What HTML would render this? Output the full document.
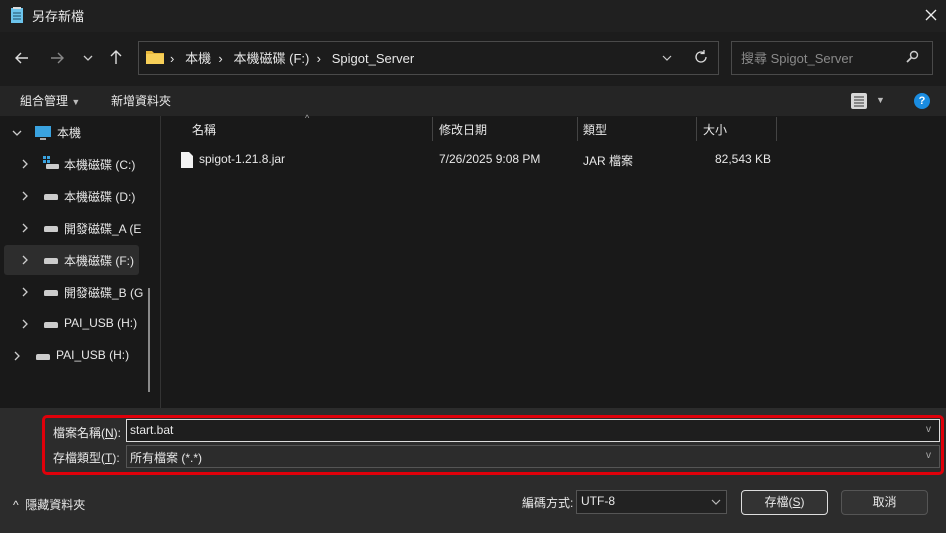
<!DOCTYPE html>
<html><head><meta charset="utf-8"><style>
*{margin:0;padding:0;box-sizing:border-box}
body{width:946px;height:533px;overflow:hidden;background:#191919;font-family:"Liberation Sans","Noto Sans CJK TC",sans-serif;font-size:12px;color:#e8e8e8;position:relative}
.a{position:absolute;white-space:nowrap}
.dim{color:#9a9a9a}
.ch{position:absolute}
</style></head><body>
<div class="a" style="left:0;top:0;width:946px;height:32px;background:#202020"></div>
<div class="a" style="left:0;top:32px;width:946px;height:54px;background:#1c1c1c"></div>
<div class="a" style="left:0;top:86px;width:946px;height:30px;background:#252525"></div>
<svg class="a" style="left:10px;top:7px" width="14" height="17"><rect x="1" y="1" width="12" height="15" fill="#6cc4ec"/><rect x="3" y="0" width="8" height="2" fill="#ddd"/><g stroke="#1b4b66"><line x1="3" y1="6" x2="11" y2="6"/><line x1="3" y1="9" x2="11" y2="9"/><line x1="3" y1="12" x2="11" y2="12"/></g></svg>
<div class="a" style="left:32px;top:6px;font-size:13px">另存新檔</div>
<svg class="a" style="left:924px;top:8px" width="14" height="14"><path d="M2 2L12 12M12 2L2 12" stroke="#eee" stroke-width="1.3"/></svg>
<svg class="a" style="left:14px;top:50px" width="16" height="16"><path d="M14 8H2M7 3L2 8l5 5" stroke="#ddd" stroke-width="1.4" fill="none"/></svg>
<svg class="a" style="left:49px;top:50px" width="16" height="16"><path d="M2 8h12M9 3l5 5-5 5" stroke="#888" stroke-width="1.4" fill="none"/></svg>
<svg class="a" style="left:82px;top:52px" width="12" height="12"><path d="M2 4l4 4 4-4" stroke="#ccc" stroke-width="1.3" fill="none"/></svg>
<svg class="a" style="left:108px;top:49px" width="16" height="16"><path d="M8 15V2M3 7l5-5 5 5" stroke="#ddd" stroke-width="1.4" fill="none"/></svg>
<div class="a" style="left:138px;top:41px;width:581px;height:34px;border:1px solid #4a4a4a;background:#1c1c1c"></div>
<svg class="a" style="left:146px;top:50px" width="18" height="14"><path d="M0 1h6l2 2h10v11H0z" fill="#e8b83c"/><rect x="0" y="4" width="18" height="10" fill="#f7cf58"/></svg>
<div class="a" style="left:170px;top:48px;font-size:13px">›&nbsp;&nbsp; 本機 &nbsp;›&nbsp;&nbsp; 本機磁碟 (F:) &nbsp;›&nbsp;&nbsp; Spigot_Server</div>
<svg class="a" style="left:662px;top:53px" width="10" height="10"><path d="M1 3l4 4 4-4" stroke="#ccc" stroke-width="1.2" fill="none"/></svg>
<svg class="a" style="left:694px;top:50px" width="14" height="14"><path d="M12 7a5 5 0 1 1-2-4M10 0v3.5h-3.5" stroke="#ddd" stroke-width="1.3" fill="none"/></svg>
<div class="a" style="left:731px;top:41px;width:202px;height:34px;border:1px solid #4a4a4a"></div>
<div class="a dim" style="left:741px;top:48px;font-size:13px;color:#8a8a8a">搜尋 Spigot_Server</div>
<svg class="a" style="left:905px;top:50px" width="14" height="14"><circle cx="9" cy="5" r="3.5" stroke="#ccc" stroke-width="1.4" fill="none"/><path d="M6.5 7.5L2 12" stroke="#ccc" stroke-width="1.8"/></svg>
<div class="a" style="left:20px;top:92px">組合管理 <span style="font-size:9px;color:#bbb">▼</span></div>
<div class="a" style="left:111px;top:92px">新增資料夾</div>
<svg class="a" style="left:851px;top:93px" width="16" height="16"><rect x="0" y="0" width="16" height="16" rx="2" fill="#d8d8d8"/><g stroke="#333"><line x1="3" y1="4" x2="13" y2="4"/><line x1="3" y1="7" x2="13" y2="7"/><line x1="3" y1="10" x2="13" y2="10"/><line x1="3" y1="13" x2="13" y2="13"/></g></svg>
<div class="a" style="left:876px;top:95px;font-size:9px;color:#bbb">▼</div>
<div class="a" style="left:914px;top:93px;width:16px;height:16px;border-radius:50%;background:#1a8ce0;color:#fff;font-size:11px;font-weight:bold;text-align:center;line-height:16px">?</div>
<div class="a" style="left:160px;top:116px;width:1px;height:292px;background:#333"></div>
<div class="a" style="left:148px;top:288px;width:2px;height:104px;background:#8a8a8a"></div>
<div class="a" style="left:4px;top:245px;width:135px;height:30px;background:#2d2d2d;border-radius:3px"></div>
<svg class="a" style="left:12px;top:128px" width="10" height="10"><path d="M1 3l4 4 4-4" stroke="#ccc" stroke-width="1.3" fill="none"/></svg>
<svg class="a" style="left:34px;top:125px" width="18" height="16"><rect x="1" y="1" width="16" height="11" fill="#3aa3e0"/><rect x="6" y="13" width="6" height="2" fill="#aaa"/></svg>
<div class="a" style="left:57px;top:124px">本機</div>
<svg class="ch" style="left:21px;top:159px" width="8" height="10"><path d="M2 1l4 4-4 4" stroke="#ccc" stroke-width="1.3" fill="none"/></svg>
<svg class="a" style="left:43px;top:156px" width="16" height="14"><rect x="0" y="0" width="3" height="3" fill="#3aa3e0"/><rect x="4" y="0" width="3" height="3" fill="#3aa3e0"/><rect x="0" y="4" width="3" height="3" fill="#3aa3e0"/><rect x="4" y="4" width="3" height="3" fill="#3aa3e0"/><rect x="3" y="8" width="13" height="5" rx="1" fill="#ccc"/></svg><div class="a" style="left:64px;top:156px">本機磁碟 (C:)</div>
<svg class="ch" style="left:21px;top:191px" width="8" height="10"><path d="M2 1l4 4-4 4" stroke="#ccc" stroke-width="1.3" fill="none"/></svg><div class="a" style="left:44px;top:194px;width:14px;height:6px;background:#ccc;border-radius:2px 2px 1px 1px"></div><div class="a" style="left:64px;top:188px">本機磁碟 (D:)</div>
<svg class="ch" style="left:21px;top:223px" width="8" height="10"><path d="M2 1l4 4-4 4" stroke="#ccc" stroke-width="1.3" fill="none"/></svg><div class="a" style="left:44px;top:226px;width:14px;height:6px;background:#ccc;border-radius:2px 2px 1px 1px"></div><div class="a" style="left:64px;top:220px">開發磁碟_A (E</div>
<svg class="ch" style="left:21px;top:255px" width="8" height="10"><path d="M2 1l4 4-4 4" stroke="#ccc" stroke-width="1.3" fill="none"/></svg><div class="a" style="left:44px;top:258px;width:14px;height:6px;background:#ccc;border-radius:2px 2px 1px 1px"></div><div class="a" style="left:64px;top:252px">本機磁碟 (F:)</div>
<svg class="ch" style="left:21px;top:287px" width="8" height="10"><path d="M2 1l4 4-4 4" stroke="#ccc" stroke-width="1.3" fill="none"/></svg><div class="a" style="left:44px;top:290px;width:14px;height:6px;background:#ccc;border-radius:2px 2px 1px 1px"></div><div class="a" style="left:64px;top:284px">開發磁碟_B (G</div>
<svg class="ch" style="left:21px;top:319px" width="8" height="10"><path d="M2 1l4 4-4 4" stroke="#ccc" stroke-width="1.3" fill="none"/></svg><div class="a" style="left:44px;top:322px;width:14px;height:6px;background:#ccc;border-radius:2px 2px 1px 1px"></div><div class="a" style="left:64px;top:316px">PAI_USB (H:)</div>
<svg class="ch" style="left:13px;top:351px" width="8" height="10"><path d="M2 1l4 4-4 4" stroke="#ccc" stroke-width="1.3" fill="none"/></svg><div class="a" style="left:36px;top:354px;width:14px;height:6px;background:#ccc;border-radius:2px 2px 1px 1px"></div><div class="a" style="left:56px;top:348px">PAI_USB (H:)</div>
<div class="a" style="left:305px;top:113px;font-size:9px;color:#aaa">^</div>
<div class="a" style="left:192px;top:121px">名稱</div>
<div class="a" style="left:432px;top:117px;width:1px;height:24px;background:#444"></div>
<div class="a" style="left:439px;top:121px">修改日期</div>
<div class="a" style="left:577px;top:117px;width:1px;height:24px;background:#444"></div>
<div class="a" style="left:583px;top:121px">類型</div>
<div class="a" style="left:696px;top:117px;width:1px;height:24px;background:#444"></div>
<div class="a" style="left:703px;top:121px">大小</div>
<div class="a" style="left:776px;top:117px;width:1px;height:24px;background:#444"></div>
<svg class="a" style="left:181px;top:152px" width="12" height="16"><path d="M0 0h8l4 4v12H0z" fill="#f2f2f2"/></svg>
<div class="a" style="left:199px;top:152px">spigot-1.21.8.jar</div>
<div class="a" style="left:439px;top:152px">7/26/2025 9:08 PM</div>
<div class="a" style="left:583px;top:152px">JAR 檔案</div>
<div class="a" style="left:715px;top:152px">82,543 KB</div>
<div class="a" style="left:0;top:408px;width:946px;height:125px;background:#2c2c2c"></div>
<div class="a" style="left:42px;top:415px;width:902px;height:60px;border:3px solid #e0000a;border-radius:5px"></div>
<div class="a" style="left:53px;top:424px">檔案名稱(<u>N</u>):</div>
<div class="a" style="left:126px;top:419px;width:814px;height:23px;border:1px solid #ddd;background:#1e1e1e"></div>
<div class="a" style="left:130px;top:423px">start.bat</div>
<div class="a" style="left:926px;top:424px;color:#aaa;font-size:10px">v</div>
<div class="a" style="left:53px;top:449px">存檔類型(<u>T</u>):</div>
<div class="a" style="left:126px;top:445px;width:814px;height:23px;border:1px solid #555;background:#2c2c2c"></div>
<div class="a" style="left:130px;top:449px">所有檔案 (*.*)</div>
<div class="a" style="left:926px;top:450px;color:#aaa;font-size:10px">v</div>
<div class="a" style="left:13px;top:496px">^ &nbsp;隱藏資料夾</div>
<div class="a" style="left:522px;top:494px">編碼方式:</div>
<div class="a" style="left:576px;top:490px;width:151px;height:24px;border:1px solid #555;background:#222"></div>
<div class="a" style="left:581px;top:494px">UTF-8</div>
<svg class="a" style="left:711px;top:497px" width="10" height="10"><path d="M1 3l4 4 4-4" stroke="#bbb" stroke-width="1.2" fill="none"/></svg>
<div class="a" style="left:741px;top:490px;width:87px;height:25px;border:1px solid #ddd;border-radius:4px;background:#333;text-align:center;line-height:22px">存檔(<u>S</u>)</div>
<div class="a" style="left:841px;top:490px;width:87px;height:25px;border:1px solid #555;border-radius:4px;background:#333;text-align:center;line-height:22px">取消</div>
</body></html>
